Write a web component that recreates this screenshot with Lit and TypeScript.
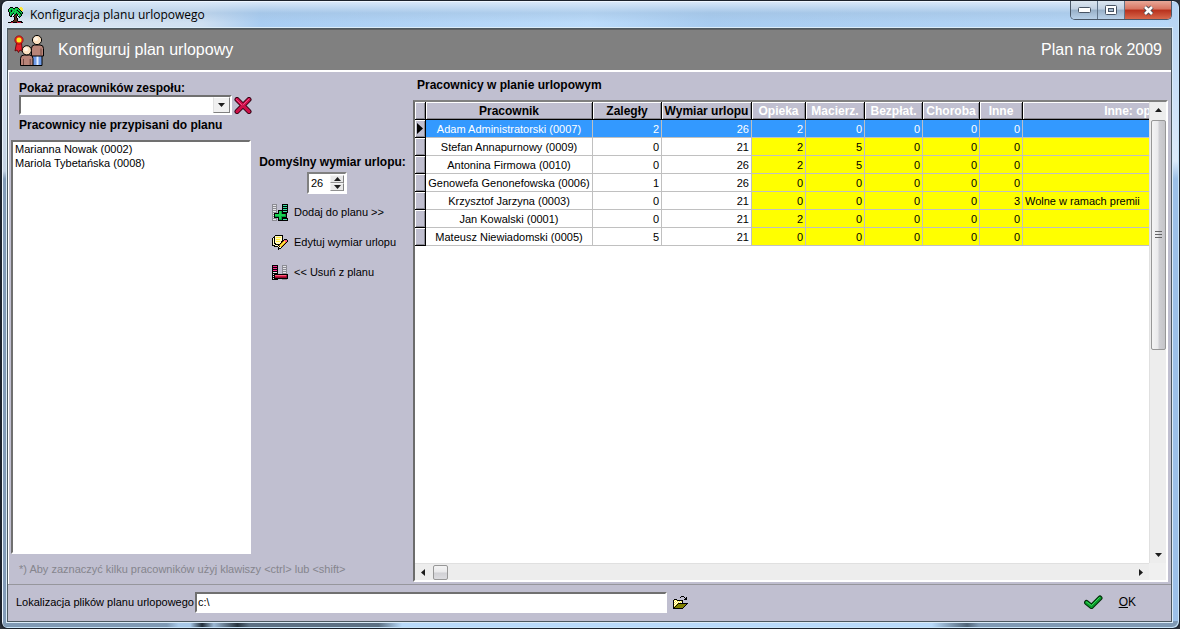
import { LitElement, html, css, svg } from "lit";
import { customElement, property, state } from "lit/decorators.js";
import { classMap } from "lit/directives/class-map.js";

const PALETTE: Record<string, string> = {
  k: "#000000",
  g: "#00a040",
  G: "#18d050",
  n: "#0a6b2c",
  b: "#5a2a1a",
  y: "#ffe93b",
  Y: "#fff9c4",
  o: "#d98a1e",
  O: "#808000",
  w: "#ffffff",
  s: "#8c8c94",
  S: "#e6e6ea",
  p: "#ff2a90",
  r: "#c8143c",
  R: "#8c0a2c",
  e: "#ff5a7a",
  t: "#3ee0a0",
};

/* Draws a small bitmap glyph, one letter of the palette per pixel. */
const bitmap = (rows: string[]) => {
  const w = Math.max(...rows.map((r) => r.length));
  return html`<svg
    width=${w}
    height=${rows.length}
    viewBox="0 0 ${w} ${rows.length}"
    shape-rendering="crispEdges"
    aria-hidden="true"
  >
    ${rows.flatMap((row, y) =>
      [...row].map((c, x) =>
        PALETTE[c] ? svg`<rect x=${x} y=${y} width="1" height="1" fill=${PALETTE[c]}></rect>` : null
      )
    )}
  </svg>`;
};

const palm = bitmap([
  "..kkk..kkk..yy..",
  ".kGGGkkGGGkyyyy.",
  "kGGgGGgGGgGkyyy.",
  "kGgkgGGGgkGGkyy.",
  "kGgkGGgGGGkgGk..",
  ".kgGGgGGgGGkgGk.",
  ".kGggkGGkGgGkgk.",
  ".kGgk.gkbkGGgk..",
  ".kGk..kbbk.gGk..",
  "..kk.kbbk.kgk...",
  "......kbk..k....",
  "......kbbk......",
  "......kbbk......",
  ".....kbbbk......",
  "...kkbbbbbkkkk..",
  "kkkrrkkkkrrrrkk.",
]);

const addIcon = bitmap([
  "sssss.....kkkkkk",
  "sSSSs.....kttttk",
  "sssss.....kkkkkk",
  "sSSSs.....kttttk",
  "sssss.....kkkkkk",
  "sSSSs.....kttttk",
  "sssss.kkkkkkkkkk",
  "sSSSs.kGGgkttttk",
  "sssss.kGGgkkkkkk",
  "sSkkkkkGGgkkkkk.",
  "sskGGGGGGGGGGgk.",
  "sSkGGGGGGGGGGgk.",
  "sskggggGGgggggk.",
  "sSkkkkkGGgkkkkk.",
  "sssss.kGGgkkkkkk",
  "sSSSs.kgggkttttk",
  "sssss.kkkkkkkkkk",
]);

const editIcon = bitmap([
  "...kkkkkkkk.....",
  "..kYYYYYYYk.....",
  ".kkYyyyyyYk.....",
  "kYkYYYYYYYk.....",
  "kYkYyyyyYYk.kkk.",
  "kYkYYYYYYYkkeeek",
  "kYkYyyyyYkkoyeek",
  "kYkYYYYYYkoyyok.",
  "kYkkYYYYkoyyok..",
  "kYYkkkkkoyyok...",
  "kkkYYYkoyyok....",
  "..kkkkYkyok.....",
  "......kYYk......",
  "......kkk.......",
  "......k.........",
]);

const removeIcon = bitmap([
  "kkkkkk....sssss.",
  "kppppk....sSSSs.",
  "kkkkkk....sssss.",
  "kppppk....sSSSs.",
  "kkkkkk....sssss.",
  "kppppk....sSSSs.",
  "kkkkkk....sssss.",
  "kSSSSk....sSSSs.",
  "kkkkkk....sssss.",
  "kSkkkkkkkkkkkkkk",
  "kkkeeeeeeeeeeerk",
  "kSkrrrrrrrrrrrRk",
  "kkkRRRRRRRRRRRRk",
  "kSkkkkkkkkkkkkkk",
  "kkkkkk....sssss.",
]);

const folderIcon = bitmap([
  "........kkk.....",
  ".......k...k.k..",
  "............kk..",
  ".kkk.......kkk..",
  "kywykkkkkk......",
  "kwywywywyk......",
  "kywywywywk......",
  "kwywykkkkkkkkkk.",
  "kywykOOOOOOOOk..",
  "kwykOOOOOOOOk...",
  "kykOOOOOOOOk....",
  "kkOOOOOOOOk.....",
  "kkkkkkkkkk......",
]);

const crossIcon = html`<svg width="18" height="17" viewBox="0 0 18 17" aria-hidden="true">
  <path d="M3 2.5 L15 14.5 M15 2.5 L3 14.5" stroke="#2a0010" stroke-width="5" stroke-linecap="round" />
  <path d="M3 2.5 L15 14.5 M15 2.5 L3 14.5" stroke="#cc1048" stroke-width="3.2" stroke-linecap="round" />
  <path d="M2.5 2.5 L8 8 M15 2 L9.500 7.500" stroke="#f4508a" stroke-width="1" stroke-linecap="round" />
</svg>`;

const checkIcon = html`<svg width="19" height="15" viewBox="0 0 19 15" aria-hidden="true">
  <path d="M2.500 7.500 L7.500 11.500 L16 3" fill="none" stroke="#002c08" stroke-width="5" stroke-linecap="round" stroke-linejoin="round" />
  <path d="M2.500 7.500 L7.500 11.500 L16 3" fill="none" stroke="#0a9c2c" stroke-width="3" stroke-linecap="round" stroke-linejoin="round" />
  <path d="M2.500 7 L7.500 10.500 L15.500 2.500" fill="none" stroke="#3ed85c" stroke-width="1" stroke-linecap="round" />
</svg>`;

const peopleIcon = html`<svg width="31" height="31" viewBox="0 0 31 31" aria-hidden="true">
  <path d="M2.500 8 L1 16 L3 15 L4.500 17.500 L6 15 L8.500 16.500 L7.500 8 Z" fill="#e8202c" stroke="#500" stroke-width=".8" />
  <circle cx="5" cy="5" r="4.200" fill="#e42a1c" stroke="#700" stroke-width=".6" />
  <circle cx="5" cy="5" r="2.500" fill="#ffe820" />
  <path d="M18.500 18 H28 V30.500 H18.500 Z" fill="#6f9be8" stroke="#000" />
  <path d="M23.500 20 V30" stroke="#e4eeff" stroke-width="2" />
  <path d="M17.500 13.500 Q17.500 10 20.500 10 H26 Q29.500 10 29.500 13.500 V21 H17.500 Z" fill="#b88478" stroke="#000" />
  <path d="M27 13.500 V20.500" stroke="#704840" />
  <circle cx="23" cy="5" r="4.600" fill="#fbe0c0" stroke="#000" />
  <circle cx="22" cy="4" r="2" fill="#fff6e8" />
  <path d="M6.500 30.500 V23.500 Q6.500 20 10 20 H15.500 Q19 20 19 23.500 V30.500 Z" fill="#b88478" stroke="#000" />
  <path d="M9.500 24 V30 M16.200 24 V30" stroke="#704840" />
  <circle cx="12.800" cy="15.300" r="4.600" fill="#fbe0c0" stroke="#000" />
  <circle cx="12" cy="14.200" r="2" fill="#fff6e8" />
</svg>`;

const arrow = (dir: "up" | "down" | "left" | "right") => {
  const paths = {
    up: "M0 4 L3.500 0 L7 4 Z",
    down: "M0 0 L7 0 L3.500 4 Z",
    left: "M4 0 L0 3.500 L4 7 Z",
    right: "M0 0 L4 3.500 L0 7 Z",
  };
  const tall = dir === "left" || dir === "right";
  return html`<svg width=${tall ? 4 : 7} height=${tall ? 7 : 4} aria-hidden="true">
    <path d=${paths[dir]} fill="#1c1c1c" />
  </svg>`;
};

interface Row {
  name: string;
  values: number[];
  note: string;
}

const ROWS: Row[] = [
  { name: "Adam Administratorski (0007)", values: [2, 26, 2, 0, 0, 0, 0], note: "" },
  { name: "Stefan Annapurnowy (0009)", values: [0, 21, 2, 5, 0, 0, 0], note: "" },
  { name: "Antonina Firmowa (0010)", values: [0, 26, 2, 5, 0, 0, 0], note: "" },
  { name: "Genowefa Genonefowska (0006)", values: [1, 26, 0, 0, 0, 0, 0], note: "" },
  { name: "Krzysztof Jarzyna (0003)", values: [0, 21, 0, 0, 0, 0, 3], note: "Wolne w ramach premii" },
  { name: "Jan Kowalski (0001)", values: [0, 21, 2, 0, 0, 0, 0], note: "" },
  { name: "Mateusz Niewiadomski (0005)", values: [5, 21, 0, 0, 0, 0, 0], note: "" },
];

@customElement("plan-grid")
class PlanGrid extends LitElement {
  @property({ attribute: false }) rows: Row[] = [];
  @state() private selected = 0;

  static styles = css`
    :host {
      display: grid;
      grid-template: minmax(0, 1fr) 17px / minmax(0, 1fr) 17px;
      border: 2px solid;
      border-color: #808080 #fff #fff #6c6c6c;
      background: #fff;
      min-height: 0;
      overflow: hidden;
    }
    .view {
      overflow: hidden;
    }
    table {
      border-collapse: separate;
      border-spacing: 0;
      table-layout: fixed;
      width: 828px;
    }
    .c-mark { width: 11px; }
    .c-name { width: 167px; }
    .c-due { width: 69px; }
    .c-size { width: 90px; }
    .c-care { width: 54px; }
    .c-mat { width: 59px; }
    .c-free { width: 58px; }
    .c-sick { width: 57px; }
    .c-other { width: 43px; }
    .c-note { width: 220px; }
    th,
    td {
      box-sizing: border-box;
      height: 18px;
      padding: 0 2px;
      line-height: 16px;
      white-space: nowrap;
      overflow: hidden;
    }
    th {
      padding: 0;
      background: #c0bfd0;
      border-right: 1px solid #000;
      border-bottom: 1px solid #000;
      box-shadow: inset 1px 1px #fff, inset -1px -1px #8a8a94;
      font-size: 12px;
      text-align: center;
    }
    .extra {
      color: #fff;
    }
    td {
      border-right: 1px solid #c0c0c0;
      border-bottom: 1px solid #c0c0c0;
      text-align: right;
    }
    td.name {
      text-align: center;
    }
    td.note {
      text-align: left;
    }
    td.yellow {
      background: #ff0;
    }
    .selected td {
      background: #3399ff;
      color: #fff;
    }
    .mark svg {
      display: block;
      margin: 0 auto;
    }
    .bar {
      display: flex;
      align-items: center;
      background: #ededed;
    }
    .vertical {
      flex-direction: column;
      border-left: 1px solid #e0e0e0;
    }
    .horizontal {
      border-top: 1px solid #e0e0e0;
    }
    .bar button {
      display: grid;
      place-items: center;
      flex: none;
      width: 16px;
      height: 16px;
      padding: 0;
      border: 0;
      background: none;
    }
    .track {
      flex: 1;
      min-width: 0;
      min-height: 0;
    }
    .thumb {
      box-sizing: border-box;
      display: grid;
      place-items: center;
      border: 1px solid #979797;
      border-radius: 2px;
    }
    .vertical .track {
      width: 15px;
      padding: 2px 0;
    }
    .vertical .thumb {
      height: 54%;
      background: linear-gradient(90deg, #f4f4f4, #e9e9eb 48%, #d0d0d4 52%, #c4c4c8);
    }
    .horizontal .thumb {
      width: 15px;
      height: 15px;
      margin-left: 2px;
      background: linear-gradient(#f4f4f4, #e9e9eb 48%, #d0d0d4 52%, #dcdce0);
    }
    .corner {
      background: #f0f0f0;
    }
  `;

  private mark(on: boolean) {
    return on
      ? html`<svg width="6" height="11" aria-hidden="true"><path d="M0 0 L6 5.500 L0 11 Z" /></svg>`
      : null;
  }

  render() {
    const classes = ["mark", "name", "due", "size", "care", "mat", "free", "sick", "other", "note"];
    const heads = ["Pracownik", "Zaległy", "Wymiar urlopu", "Opieka", "Macierz.", "Bezpłat.", "Choroba", "Inne", "Inne: opis"];
    return html`
      <div class="view">
        <table aria-label="Pracownicy w planie urlopowym">
          <colgroup>
            ${classes.map((c) => html`<col class="c-${c}" />`)}
          </colgroup>
          <thead>
            <tr>
              <th></th>
              ${heads.map((h, i) => html`<th scope="col" class=${classMap({ extra: i > 2 })}>${h}</th>`)}
            </tr>
          </thead>
          <tbody>
            ${this.rows.map(
              (row, i) => html`<tr
                class=${classMap({ selected: i === this.selected })}
                @click=${() => (this.selected = i)}
              >
                <th class="mark">${this.mark(i === this.selected)}</th>
                <td class="name">${row.name}</td>
                ${row.values.map((v, j) => html`<td class=${classMap({ yellow: j > 1 })}>${v}</td>`)}
                <td class="note yellow">${row.note}</td>
              </tr>`
            )}
          </tbody>
        </table>
      </div>
      <div class="bar vertical">
        <button aria-label="W górę">${arrow("up")}</button>
        <div class="track">
          <div class="thumb">
            <svg width="7" height="9" aria-hidden="true">
              <path d="M0 1.500 H7 M0 4.500 H7 M0 7.500 H7" stroke="#666" />
            </svg>
          </div>
        </div>
        <button aria-label="W dół">${arrow("down")}</button>
      </div>
      <div class="bar horizontal">
        <button aria-label="W lewo">${arrow("left")}</button>
        <div class="track"><div class="thumb"></div></div>
        <button aria-label="W prawo">${arrow("right")}</button>
      </div>
      <div class="corner"></div>
    `;
  }
}

@customElement("app-root")
class AppRoot extends LitElement {
  static styles = css`
    :host {
      display: block;
      height: 100vh;
      background: #2c3038;
      font-family: "Liberation Sans", Arial, sans-serif;
      font-size: 11px;
      color: #000;
    }
    button,
    input,
    select {
      font: inherit;
      color: inherit;
    }
    .window {
      box-sizing: border-box;
      display: flex;
      flex-direction: column;
      height: 100%;
      padding: 0 7px 6px 5px;
      border: 1px solid #1c222c;
      border-left-width: 2px;
      border-radius: 7px;
      box-shadow: inset 1px 1px #eef6ff, inset -1px -1px #c8e4f8;
      background:
        linear-gradient(90deg, #7f99b4 0 14%, #a8c8e8 15% 16%, #202c38 17%, #9cb8d4 18%, #283440 20%, #5c7084 21% 32%, #b9dafa 34% 79%, #506478 82%, #7f99b4 83%) bottom / 100% 7px no-repeat,
        linear-gradient(#dbe6f4, #c4d2e4 170px, #829bb8 178px) left / 8px 100% no-repeat,
        linear-gradient(#b4d2f2, #dceafa 160px, #9cc0e8 178px) right / 10px 100% no-repeat,
        linear-gradient(#dceafa 0, rgba(160, 190, 220, 0.45) 12px, rgba(255, 255, 255, 0) 22px),
        linear-gradient(90deg, #dfe8f2, #cfe0f2 17%, #a9cdf2 22%, #bcdcfb 50%, #a8ccf0 60%, #b8d8f8);
    }
    .title {
      display: flex;
      justify-content: space-between;
      flex: none;
      height: 27px;
    }
    .caption {
      display: flex;
      align-items: center;
      gap: 6px;
      padding-left: 1px;
      font-family: "Open Sans", "Noto Sans", sans-serif;
      font-size: 12px;
    }
    .controls {
      display: flex;
      height: 18px;
      border: 1px solid #4a5868;
      border-top: 0;
      border-radius: 0 0 5px 5px;
      overflow: hidden;
    }
    .controls button {
      display: grid;
      place-items: center;
      width: 27px;
      padding: 0;
      border: 0;
      border-right: 1px solid #60748a;
      background: linear-gradient(#dce6f0, #c0d0e2 45%, #98b0c8 50%, #b8d0e8);
    }
    .controls .close {
      width: 46px;
      border-right: 0;
      background: linear-gradient(#e8a898, #d87460 45%, #b8301c 50%, #d8684c);
    }
    .client {
      display: flex;
      flex-direction: column;
      flex: 1;
      min-height: 0;
      border: 1px solid #4c5860;
      box-shadow: 0 0 0 1px #dcecf8;
      background: #c0bfd0;
    }
    header {
      display: flex;
      align-items: center;
      flex: none;
      gap: 13px;
      height: 40px;
      padding: 0 9px 0 6px;
      border-top: 1px solid #606060;
      border-bottom: 2px solid #fff;
      background: #808080;
      color: #fff;
      font-size: 16px;
    }
    header h1 {
      flex: 1;
      margin: 0;
      font-size: 16px;
      font-weight: 400;
    }
    main {
      display: grid;
      grid-template-columns: 243px 161px minmax(0, 1fr);
      flex: 1;
      min-height: 0;
      border-left: 1px solid #fff;
      padding-right: 3px;
    }
    .caption-bold {
      font-size: 12px;
      font-weight: 700;
      line-height: 13px;
      white-space: nowrap;
      margin: 0;
    }
    .left {
      display: flex;
      flex-direction: column;
      min-height: 0;
      padding: 10px 0 0 2px;
    }
    .left .caption-bold {
      padding-left: 8px;
    }
    .team {
      display: flex;
      align-items: center;
      gap: 2px;
      padding: 0 0 0 8px;
      margin-bottom: 4px;
    }
    .icon-button {
      display: flex;
      padding: 0;
      border: 0;
      background: none;
    }
    .combo {
      display: grid;
      grid-template-columns: minmax(0, 1fr) 17px;
      box-sizing: border-box;
      width: 215px;
      height: 20px;
      border: 2px solid;
      border-color: #707070 #fff #fff #707070;
      background: #fff;
    }
    .combo select {
      grid-area: 1 / 1 / 2 / 3;
      appearance: none;
      border: 0;
      background: none;
      outline: 0;
    }
    .drop {
      grid-area: 1 / 2;
      display: grid;
      place-items: center;
      pointer-events: none;
      background: #f0f0f0;
      border: 1px solid;
      border-color: #fff #808080 #808080 #e0e0e0;
    }
    .list {
      flex: 1;
      width: 240px;
      min-height: 0;
      margin-top: 8px;
      padding: 1px 0;
      border: 2px solid;
      border-color: #707070 #fff #fff #707070;
      border-radius: 0;
      background: #fff;
      outline: 0;
      overflow: hidden;
    }
    .list option {
      min-height: 14px;
      padding: 0 2px;
      line-height: 14px;
    }
    .hint {
      margin: 0;
      padding: 8px 0 0 8px;
      height: 22px;
      line-height: 14px;
      color: #85858d;
      white-space: nowrap;
    }
    .middle {
      display: flex;
      flex-direction: column;
      align-items: center;
      padding-top: 84px;
    }
    .spin {
      display: flex;
      align-self: flex-start;
      margin: 3px 0 3px 55px;
      padding: 1px;
      border: 2px solid;
      border-color: #808080 #fff #fff #808080;
      background: #fff;
    }
    .spin input {
      box-sizing: border-box;
      width: 20px;
      height: 16px;
      padding: 0 1px;
      border: 0;
      outline: 0;
    }
    .steps {
      display: grid;
      width: 14px;
    }
    .steps button {
      display: grid;
      place-items: center;
      padding: 0;
      border: 1px solid;
      border-color: #f4f4f4 #808080 #909090 #f4f4f4;
      background: #e8e8e8;
    }
    .action {
      display: flex;
      align-items: center;
      align-self: flex-start;
      gap: 6px;
      height: 30px;
      margin-left: 20px;
      padding: 0;
      border: 0;
      background: none;
      white-space: nowrap;
    }
    .right {
      display: flex;
      flex-direction: column;
      min-width: 0;
      min-height: 0;
      padding: 7px 0 2px;
    }
    .right .caption-bold {
      padding: 0 0 8px 4px;
    }
    plan-grid {
      flex: 1;
    }
    footer {
      box-sizing: border-box;
      display: flex;
      align-items: center;
      flex: none;
      height: 37px;
      padding: 0 35px 2px 8px;
      border-top: 1px solid #96969c;
    }
    footer label {
      margin-right: 1px;
    }
    .path {
      box-sizing: border-box;
      flex: 0 1 472px;
      height: 21px;
      min-width: 0;
      margin-right: 6px;
      padding: 0 1px;
      border: 2px solid;
      border-color: #707070 #fff #fff #707070;
      outline: 0;
    }
    .ok {
      display: flex;
      align-items: center;
      gap: 16px;
      margin-left: auto;
      padding: 0;
      border: 0;
      background: none;
      font-size: 12px;
    }
  `;

  @state() private size = 26;

  render() {
    return html`
      <div class="window">
        <div class="title">
          <div class="caption">${palm}<span>Konfiguracja planu urlopowego</span></div>
          <div class="controls">
            <button aria-label="Minimalizuj">
              <svg width="13" height="6"><rect x=".5" y=".5" width="12" height="5" rx="1" fill="#fff" stroke="#485464" /></svg>
            </button>
            <button aria-label="Maksymalizuj">
              <svg width="12" height="10">
                <rect x=".5" y=".5" width="11" height="9" rx="1" fill="#fff" stroke="#485464" />
                <rect x="3.500" y="3.500" width="5" height="3" fill="#a8bcd0" stroke="#485464" />
              </svg>
            </button>
            <button class="close" aria-label="Zamknij">
              <svg width="13" height="11" viewBox="0 0 13 11">
                <path d="M3 2 L10 9 M10 2 L3 9" stroke="#484850" stroke-width="4.500" />
                <path d="M3 2 L10 9 M10 2 L3 9" stroke="#fff" stroke-width="2.600" />
              </svg>
            </button>
          </div>
        </div>
        <div class="client">
          <header>
            ${peopleIcon}
            <h1>Konfiguruj plan urlopowy</h1>
            <span>Plan na rok 2009</span>
          </header>
          <main>
            <section class="left">
              <label class="caption-bold" for="team">Pokaż pracowników zespołu:</label>
              <div class="team">
                <div class="combo">
                  <select id="team"><option></option></select>
                  <span class="drop">${arrow("down")}</span>
                </div>
                <button class="icon-button" aria-label="Wyczyść">${crossIcon}</button>
              </div>
              <label class="caption-bold" for="people">Pracownicy nie przypisani do planu</label>
              <select id="people" class="list" multiple>
                <option>Marianna Nowak (0002)</option>
                <option>Mariola Tybetańska (0008)</option>
              </select>
              <p class="hint">*) Aby zaznaczyć kilku pracowników użyj klawiszy &lt;ctrl&gt; lub &lt;shift&gt;</p>
            </section>
            <section class="middle">
              <label class="caption-bold" for="size">Domyślny wymiar urlopu:</label>
              <div class="spin">
                <input id="size" type="text" inputmode="numeric" .value=${String(this.size)} />
                <div class="steps">
                  <button aria-label="Więcej" @click=${() => this.size++}>${arrow("up")}</button>
                  <button aria-label="Mniej" @click=${() => this.size--}>${arrow("down")}</button>
                </div>
              </div>
              <button class="action">${addIcon}<span>Dodaj do planu &gt;&gt;</span></button>
              <button class="action">${editIcon}<span>Edytuj wymiar urlopu</span></button>
              <button class="action">${removeIcon}<span>&lt;&lt; Usuń z planu</span></button>
            </section>
            <section class="right">
              <h2 class="caption-bold">Pracownicy w planie urlopowym</h2>
              <plan-grid .rows=${ROWS}></plan-grid>
            </section>
          </main>
          <footer>
            <label for="path">Lokalizacja plików planu urlopowego</label>
            <input id="path" class="path" type="text" value="c:\\" />
            <button class="icon-button" aria-label="Wybierz folder">${folderIcon}</button>
            <button class="ok">${checkIcon}<span><u>O</u>K</span></button>
          </footer>
        </div>
      </div>
    `;
  }
}
